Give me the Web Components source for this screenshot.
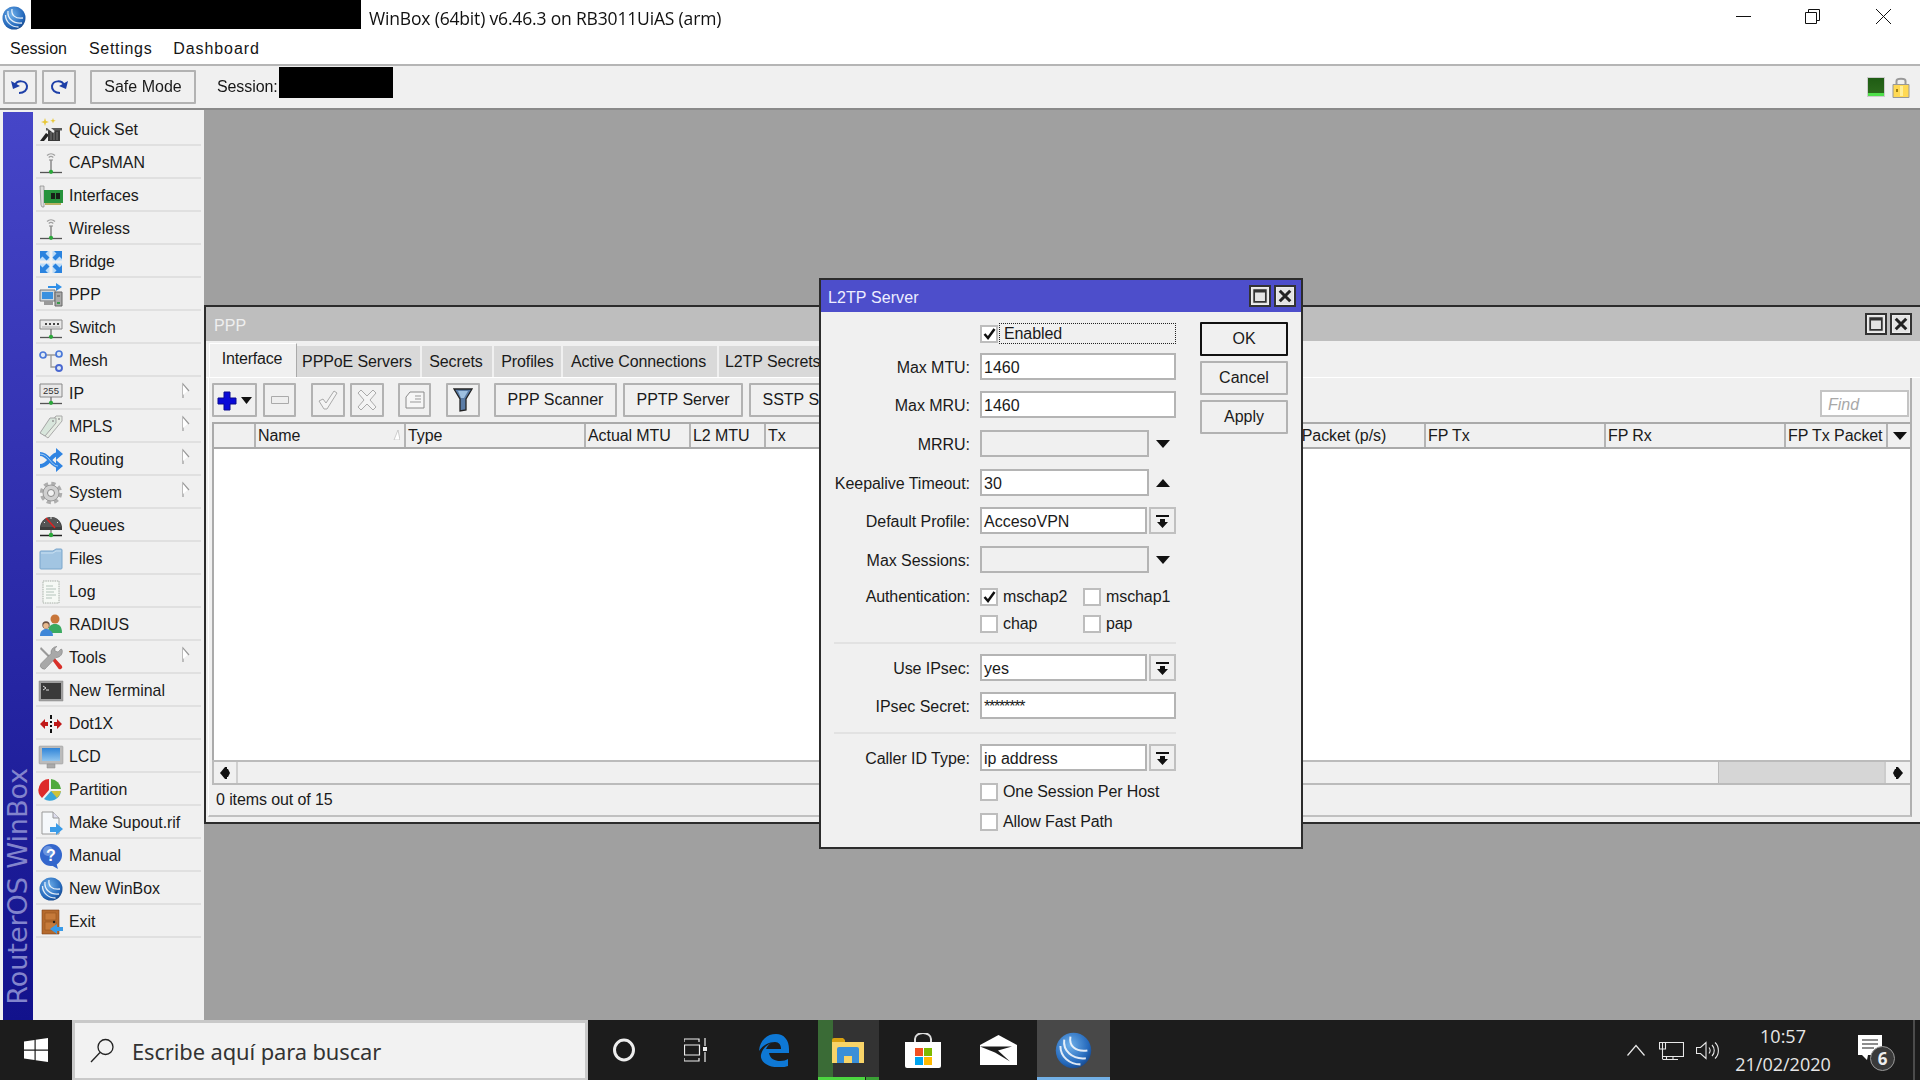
<!DOCTYPE html>
<html><head><meta charset="utf-8"><title>WinBox</title>
<style>
html,body{margin:0;padding:0;width:1920px;height:1080px;overflow:hidden;background:#a0a0a0;font:16px "Liberation Sans",Arial,sans-serif;color:#151515}
</style>
<script>
const def=(name,css,render)=>customElements.define(name,class extends HTMLElement{
  constructor(){super();this.attachShadow({mode:'open'})}
  connectedCallback(){this.shadowRoot.innerHTML=`<style>${css}</style>`+render(this)}
});
const a=(e,n,d='')=>e.hasAttribute(n)?e.getAttribute(n):d;
const S=(b,s)=>`<svg xmlns="http://www.w3.org/2000/svg" viewBox="${b}" style="display:block;width:100%;height:100%;overflow:visible">${s}</svg>`;
const wbLogo=`<defs><radialGradient id="wg" cx=".4" cy=".35" r=".75"><stop offset="0" stop-color="#6fb0ea"/><stop offset=".7" stop-color="#2468bb"/><stop offset="1" stop-color="#143c78"/></radialGradient></defs><ellipse cx="12" cy="12" rx="11.5" ry="11.5" fill="url(#wg)"/><path d="M6 5c-1 7 5 13 14 12M10 3c-1 6 3 10 11 9M3.5 9c0 7 6 12 13 12" fill="none" stroke="#fff" stroke-opacity=".85" stroke-width="1.3"/>`;
const ant=`<path d="M8 4.500a6 6 0 0 1 8 0M9.700 6.500a3.500 3.500 0 0 1 4.600 0" fill="none" stroke="#a0a0a0" stroke-width="1.200"/><path d="M10 9h4" stroke="#999" stroke-width="1.200"/><path d="M12 9v11" stroke="#8a8a8a" stroke-width="1.500"/><path d="M1 21.500h22" stroke="#555" stroke-width="1.300"/><circle cx="12" cy="20.800" r="2.100" fill="#2aa83a"/>`;
const ICONS={
quick:`<path d="M1 23l6-8 3 2-5 6z" fill="#222"/><path d="M9 11h12v12H9z" fill="#3a3a3a"/><path d="M7 10h16v2.500H7z" fill="#5a5a5a"/><path d="M12 14v8M15 14v8M18 14v8" stroke="#777"/><path d="M5 6l10 8" stroke="#eee" stroke-width="2.400"/><path d="M6 0l1 3 3 1-3 1-1 3-1-3-3-1 3-1zM14 0l.7 2 2 .7-2 .7-.7 2-.7-2-2-.7 2-.7z" fill="#e8c838"/>`,
ant,
ifaces:`<path d="M1 2h4v21H3l-1-2z" fill="#dcdcdc" stroke="#888" stroke-width=".7"/><path d="M5 6h19v13H5z" fill="#27933c"/><path d="M12 9h4v6h-4zM17 9h4v6h-4z" fill="#182018"/><path d="M6 19h16v2H6z" fill="#b8b060"/>`,
bridge:`<path d="M1 1h9.500v9.500H1z" fill="#bcdcf8"/><path d="M13.500 1H23v9.500h-9.500zM1 13.500h9.500V23H1zM13.500 13.500H23V23h-9.500z" fill="#bcdcf8"/><path d="M1 1h8l-2.500 2.500 4 4-3 3-4-4L1 9zM23 1h-8l2.500 2.500-4 4 3 3 4-4L23 9zM1 23h8l-2.500-2.500 4-4-3-3-4 4L1 15zM23 23h-8l2.500-2.500-4-4 3-3 4 4L23 15z" fill="#2a83df"/>`,
ppp:`<path d="M1 7h15v11H1z" fill="#cfd6dd" stroke="#777"/><path d="M3 9h11v7H3z" fill="#3a90df"/><path d="M5 18h9v4H5z" fill="#999"/><path d="M16 9h7v14h-7z" fill="#aaa" stroke="#666"/><path d="M18 13h3" stroke="#555"/><path d="M18 19h3v2h-3z" fill="#3a9a4a"/><path d="M9 3h8V0l6 4-6 4V5H9z" fill="#2f8fe8"/>`,
sw:`<path d="M1 4h22v9H1z" fill="#eaeaea" stroke="#888"/><path d="M6 7h2v2H6zM10 7h2v2h-2zM14 7h2v2h-2zM18 7h2v2h-2z" fill="#444"/><path d="M3 11h18" stroke="#aaa"/><path d="M12 13v7" stroke="#777" stroke-width="1.400"/><path d="M1 21.500h22" stroke="#555" stroke-width="1.300"/><circle cx="12" cy="20.800" r="2.100" fill="#2aa83a"/>`,
mesh:`<path d="M7 6h10M12 6v12h6" fill="none" stroke="#999" stroke-width="1.300"/><circle cx="4" cy="6" r="3" fill="#dfe9f5" stroke="#4a78d8" stroke-width="1.700"/><circle cx="20" cy="5" r="3" fill="#dfe9f5" stroke="#4a78d8" stroke-width="1.700"/><circle cx="20" cy="19" r="3" fill="#dfe9f5" stroke="#4a68d0" stroke-width="1.900"/>`,
ip:`<path d="M1 2h22v13H1z" fill="#e8e8e8" stroke="#888"/><text x="12" y="12" text-anchor="middle" font-family="Liberation Sans" font-size="9.500" fill="#333">255</text><path d="M12 15v5" stroke="#777" stroke-width="1.400"/><path d="M1 21.500h22" stroke="#555" stroke-width="1.300"/><circle cx="12" cy="20.800" r="2.100" fill="#2aa83a"/>`,
mpls:`<path d="M17 1h6v5L9 23l-7-5z" fill="#e6ece4" stroke="#aaa"/><path d="M11 3h6v5L6 21l-5-3z" fill="#d8e6dc" stroke="#a5a5a5"/><circle cx="20" cy="4" r="1" fill="#999"/><circle cx="14" cy="6" r="1" fill="#999"/>`,
routing:`<path d="M1 6c9 0 11 12 18 12M1 18c9 0 11-12 18-12" fill="none" stroke="#2f84e2" stroke-width="4"/><path d="M17 0l7 6-7 6zM17 12l7 6-7 6z" fill="#2f84e2"/><path d="M1 6c9 0 11 12 18 12" fill="none" stroke="#9cc8f4" stroke-width="1"/>`,
gear:`<circle cx="12" cy="12" r="9" fill="none" stroke="#aeaeae" stroke-width="4.500" stroke-dasharray="4 3.070"/><circle cx="12" cy="12" r="8" fill="#d0d0d0" stroke="#999"/><circle cx="12" cy="12" r="3.500" fill="#f2f2f2" stroke="#888"/>`,
queues:`<path d="M1 14a11 11 0 0 1 22 0v2H1z" fill="#3e3e3e"/><path d="M2 13a10 10 0 0 1 20 0z" fill="#555"/><path d="M7 4l9 10" stroke="#e02020" stroke-width="1.500"/><path d="M5 8l1 1M12 3v2M19 8l-1 1" stroke="#ddd"/><path d="M1 21.500h22" stroke="#222" stroke-width="1.500"/><path d="M12 16v4" stroke="#555"/><circle cx="12" cy="21" r="2.200" fill="#2aa83a"/>`,
folder:`<path d="M1 5q0-1 1-1h12l3-2h5q1 0 1 1v18q0 1-1 1H2q-1 0-1-1z" fill="#a2c5e2" stroke="#7aa6cc"/><path d="M2 6h12l3-2h5" fill="none" stroke="#c9e0f2"/>`,
log:`<path d="M4 1h16v22H4z" fill="#f6f9f5" stroke="#a8b0a8" stroke-dasharray="1.500 .8"/><path d="M7 6h7M7 9h10M7 12h8M7 15h10M7 18h6" stroke="#b4c4bb"/>`,
radius:`<circle cx="16" cy="6" r="4.500" fill="#c8763a"/><path d="M9 20c0-7 3-9 7-9s7 2 7 9z" fill="#3aaa60"/><circle cx="7" cy="12" r="3.700" fill="#6a5040"/><circle cx="7" cy="12.800" r="2.800" fill="#e7b98e"/><path d="M1 23c0-5 3-7 6-7s7 2 7 7z" fill="#3f87d8"/>`,
tools:`<path d="M2 1l10 10-1.500 1.500L1 3z" fill="#999"/><path d="M11 11l2-2 10 11q1 2-1 3t-3-1z" fill="#d8302a"/><path d="M22 3l-3 3-3-1 0-3 2-1.500a6 6 0 0 0-6 7L2 17.500q-2 3 1 5t4.500-1l9.500-10a6 6 0 0 0 6-8z" fill="#a8a8a8" stroke="#777" stroke-width=".5"/>`,
term:`<path d="M0 2h24v20H0z" fill="#a0a0a0" stroke="#888" stroke-width=".5"/><path d="M2 4h20v16H2z" fill="#3a3a3a"/><path d="M4 7l3 2-3 2M7 11h3" stroke="#ddd" fill="none"/>`,
dot:`<path d="M1 12l5-5v3h3v4H6v3zM23 12l-5-5v3h-3v4h3v3z" fill="#c01818"/><path d="M11 3h2v4h-2zM11 9h2v2h-2zM11 13h2v2h-2zM11 17h2v4h-2z" fill="#111"/>`,
lcd:`<defs><linearGradient id="lg" x2="0" y2="1"><stop offset="0" stop-color="#2f84d8"/><stop offset="1" stop-color="#8fc4ee"/></linearGradient></defs><path d="M1 1h22q1 0 1 1v16q0 1-1 1H1q-1 0-1-1V2q0-1 1-1z" fill="#bbb" stroke="#999" stroke-width=".5"/><path d="M3 3h18v13H3z" fill="url(#lg)"/><path d="M8 19h8v4H8z" fill="#aaa" stroke="#888" stroke-width=".5"/>`,
part:`<path d="M10 1A11 11 0 0 0 3 20l7-8z" fill="#dd2b2b"/><path d="M12 1a11 11 0 0 1 10 10H12z" fill="#4eaa3c"/><path d="M22 13a11 11 0 0 1-17 8l7-8z" fill="#39a5d8"/><path d="M22 13a11 11 0 0 1-4 7l-6-7z" fill="#cfc23a"/>`,
sup:`<path d="M3 1h11l6 6v16H3z" fill="#f5f8fb" stroke="#999"/><path d="M14 1v6h6" fill="#dde" stroke="#999"/><path d="M11 16h6v-4l7 6-7 6v-3h-6z" fill="#3a9be8"/>`,
man:`<circle cx="12" cy="11" r="11" fill="#3366cc"/><path d="M12 21l7 4-2-7z" fill="#3366cc"/><circle cx="9" cy="7" r="5" fill="#8fb0ea" opacity=".6"/><text x="12" y="17" text-anchor="middle" font-family="Liberation Sans" font-weight="700" font-size="16" fill="#fff">?</text>`,
wb:wbLogo,
exit:`<path d="M3 0h17v24H3z" fill="#b56a2d" stroke="#7c421a" stroke-width=".6"/><path d="M6 3h11v7H6zM6 12h11v8H6z" fill="#c67a3a" stroke="#94551f" stroke-width=".6"/><circle cx="15" cy="12" r="1.200" fill="#222"/><path d="M24 17h-6v-3l-7 5 7 5v-3h6z" fill="#3a9be8"/>`,
};
def('wb-icon',':host{display:block;width:var(--s,24px);height:var(--s,24px);flex:none}',e=>S('0 0 24 24',ICONS[a(e,'name')]||''));

def('wb-titlebar',`:host{display:flex;align-items:center;height:35px;background:#fff;position:relative;font:17.500px "Open Sans",sans-serif;color:#111}
.logo{width:24px;height:24px;margin:0 0 0 2px}.red{width:330px;height:29px;background:#000;margin:-6px 8px 0 5px;flex:none}
.t{flex:1;letter-spacing:-.17px;margin-top:0}.b{width:15px;height:15px;margin-top:-3px}
.b svg{display:block}`,e=>`<div class="logo">${S('0 0 24 24',wbLogo)}</div><div class="red"></div><div class="t"><slot></slot></div>
<div class="b" style="margin-right:54px"><svg width="15" height="15" fill="none" stroke="#111"><path d="M0 7.500h15"/></svg></div>
<div class="b" style="margin-right:56px"><svg width="15" height="15" fill="none" stroke="#111"><path d="M.5 3.500h11v11H.5zM3.500 3.500V.5h11v11h-3"/></svg></div>
<div class="b" style="margin-right:29px"><svg width="15" height="15" fill="none" stroke="#111"><path d="M0 0l15 15M15 0L0 15"/></svg></div>`);

def('wb-menubar',`:host{display:flex;align-items:center;background:#fff;padding:0 0 2px 10px;border-bottom:2px solid #b5b5b5;box-sizing:content-box;height:27px;font:16px "Liberation Sans",sans-serif}
::slotted(span){margin-right:21px}`,()=>`<slot></slot>`);

def('wb-toolbutton',`:host{display:flex;align-items:center;justify-content:center;box-sizing:border-box;height:var(--h,34px);background:#f0f0f0;border:2px solid #b2b2b2;border-radius:1px;flex:none;font:16px "Liberation Sans",sans-serif;color:#1a1a1a;white-space:nowrap}
:host([dark]){border-color:#111}svg{display:block}`,e=>`<slot></slot>`);

def('wb-mainbar',`:host{display:flex;align-items:center;height:42px;background:#f0f0f0;border-bottom:2px solid #8a8a8a;padding-left:3px;--h:34px;position:relative}
.sp{flex:1}.st{width:16px;height:18px;background:linear-gradient(#1f5c14,#2c6a1c 85%,#4fe04a 85%);margin-right:7px;border:1px solid #ccc}
.lock{width:18px;height:22px;margin-right:10px}`,()=>`<slot></slot><div class="sp"></div><div class="st"></div>
<div class="lock">${S('0 0 18 22',`<path d="M4.500 9V5c0-3 9-3 9 0v4" fill="none" stroke="#999" stroke-width="2"/><path d="M1 8.500h16v13H1z" fill="#ffd954" stroke="#999"/><path d="M8 10v10h3V10z" fill="#ffef9a"/><path d="M4 13h2v3H4z" fill="#a08010"/>`)}</div>`);

def('wb-sideitem',`:host{display:flex;align-items:center;height:33px;box-sizing:border-box;border-bottom:2px solid #e0e0e0;padding:2px 0 0 3px;position:relative;font:15.900px "Liberation Sans",sans-serif;color:#1a1a1a}
span{margin-left:6px;white-space:nowrap}
.arr{position:absolute;right:11px;top:6px;width:8px;height:16px}`,e=>`<wb-icon name="${a(e,'icon')}"></wb-icon><span><slot></slot></span>${e.hasAttribute('sub')?`<div class="arr">${S('0 0 8 16','<path d="M1 15V1l6 7" fill="none" stroke="#999" stroke-width="1.200"/><path d="M1 2l4.500 6L1 12z" fill="#fff"/>')}</div>`:''}`);

def('wb-sidebar',`:host{display:flex;width:204px;height:100%;flex:none;background:#f0f0f0;padding:2px 0 0 3px;box-sizing:border-box}
.brand{width:30px;background:linear-gradient(#4646c8,#12128c);display:flex;flex-direction:column;justify-content:flex-end;align-items:center}
.brand span{writing-mode:vertical-rl;transform:rotate(180deg);font:27.100px "DejaVu Sans",sans-serif;color:#8284cc;padding-top:15px;line-height:28px;white-space:nowrap;letter-spacing:-.1px}
.list{flex:1;padding:1px 3px 0 3px}`,()=>`<div class="brand"><span>RouterOS WinBox</span></div><div class="list"><slot></slot></div>`);

def('wb-window',`:host{position:absolute;display:flex;flex-direction:column;box-sizing:border-box;background:#f0f0f0;border:2px solid #2c2c2c}
.tb{display:flex;align-items:center;height:var(--th);flex:none;background:var(--tc);color:var(--tt);font:16px "Liberation Sans",sans-serif;padding-left:var(--tp,8px);letter-spacing:.1px}
.tb span{flex:1;padding-top:3px}.w{width:var(--bw,22px);height:22px;box-sizing:border-box;border:2px solid #333;background:#e4e4e4;margin-right:3px;padding:2px;outline:1px solid #eee;outline-offset:-3px}
.body{flex:1;display:flex;flex-direction:column;min-height:0}`,e=>`<div class="tb"><span>${a(e,'heading')}</span>
<div class="w">${S('0 0 12 12','<path d="M1 1h10v10H1z" fill="none" stroke="#333" stroke-width="1.500"/><path d="M1 2h10" stroke="#333" stroke-width="2"/>')}</div>
<div class="w" style="margin-right:var(--wm,3px)">${S('0 0 12 12','<path d="M1.500 1.500l9 9M10.500 1.500l-9 9" stroke="#222" stroke-width="2.600"/>')}</div></div><div class="body"><slot></slot></div>`);

def('wb-tabs',`:host{display:flex;align-items:flex-end;height:37px;flex:none;padding-left:3px;overflow:hidden;border-bottom:1px solid #fff;box-sizing:border-box}`,()=>`<slot></slot>`);
def('wb-tab',`:host{display:flex;align-items:center;justify-content:center;flex:none;height:31px;box-sizing:border-box;background:#d9d9d9;margin-left:2px;font:16px "Liberation Sans",sans-serif;color:#1a1a1a;white-space:nowrap;letter-spacing:-.1px;padding-top:1px;overflow:hidden}
:host([active]){height:34px;background:#f0f0f0;border:1px solid #fff;border-bottom:0;border-right:1px solid #aaa;margin-left:0;padding-bottom:5px;letter-spacing:-.2px;padding-right:2px}`,()=>`<slot></slot>`);

def('wb-panel',`:host{display:flex;flex-direction:column;flex:1;min-height:0;margin:0 8px 5px 2px;border-left:1px solid #fff;border-right:2px solid #b0b0b0;border-bottom:2px solid #c0c0c0;padding:5px 0 0 3px}`,()=>`<slot></slot>`);
def('wb-ptoolbar',`:host{display:flex;align-items:center;height:34px;flex:none;gap:6px;overflow:hidden;position:relative;padding-right:2px}
.find{position:absolute;right:1px;top:7px;width:89px;height:27px;box-sizing:border-box;background:#fff;border:2px solid #c4c4c4;font:italic 16px "Liberation Sans",sans-serif;color:#a8a8a8;padding:4px 0 0 6px}`,()=>`<slot></slot><div class="find">Find</div>`);

def('wb-thead',`:host{display:flex;height:27px;flex:none;margin-top:5px;border:2px solid #aaa;border-width:2px 0 2px 2px;box-sizing:border-box;background:#f0f0f0}`,()=>`<slot></slot>`);
def('wb-th',`:host{display:flex;align-items:center;box-sizing:border-box;flex:none;border-right:2px solid #b4b4b4;padding:0 0 0 2px;font:16px "Liberation Sans",sans-serif;color:#1a1a1a;white-space:nowrap;overflow:hidden;position:relative;letter-spacing:-.08px}`,()=>`<slot></slot>`);
def('wb-tbody',`:host{display:block;flex:1;background:#fff;border-left:2px solid #aaa}`,()=>``);
def('wb-hscroll',`:host{display:flex;height:25px;flex:none;border:2px solid #bbb;border-width:2px 0 2px 2px;box-sizing:border-box;background:#f0f0f0}
.b{width:22px;display:flex;align-items:center;justify-content:center;flex:none;border-right:2px solid #d0d0d0}.b.r{border:0;border-left:2px solid #ccc;width:24px}
.th{flex:1;border-right:1px solid #bbb}.tr{width:165px;background:#d6d6d6}`,()=>`<div class="b"><svg width="10" height="12"><path d="M0 6l5-6h2v12H5z" fill="#111"/><path d="M5 2h3l2 4-2 4H5z" fill="#111"/></svg></div><div class="th"></div><div class="tr"></div><div class="b r"><svg width="10" height="12"><path d="M10 6L5 0H3v12h2z" fill="#111"/><path d="M5 2H2L0 6l2 4h3z" fill="#111"/></svg></div>`);
def('wb-status',`:host{display:flex;align-items:center;height:30px;flex:none;padding-left:4px;font:16px "Liberation Sans",sans-serif;color:#1a1a1a;letter-spacing:-.1px}`,()=>`<slot></slot>`);

def('wb-field',`:host{display:grid;grid-template-columns:136px 1fr;column-gap:10px;align-items:center;height:27px;font:16px "Liberation Sans",sans-serif;color:#1a1a1a;margin-top:var(--mt,11px)}
.l{text-align:right;white-space:nowrap;letter-spacing:-.05px;padding-top:2px}.r{display:flex;align-items:center}
.v{box-sizing:border-box;height:27px;background:#fff;border:2px solid #b4b4b4;padding:0 0 0 2px;line-height:25px;font-size:16px;white-space:nowrap;overflow:hidden}
.v.pw{letter-spacing:-1.200px}
:host([off]) .v{background:#f0f0f0}
.tri{width:27px;display:flex;justify-content:center;box-sizing:border-box;padding-left:1px}
.dd{box-sizing:border-box;width:27px;height:27px;background:#f0f0f0;border:2px solid #c0c0c0;margin-left:2px;display:flex;align-items:center;justify-content:center}`,e=>{
  const k=a(e,'kind','full');const w={full:196,short:169,drop:167}[k];
  const t=a(e,'tri');
  return `<div class="l">${a(e,'label')}</div><div class="r"><div class="v${e.hasAttribute('pw')?' pw':''}" style="width:${w}px">${a(e,'value')}</div>${
    k==='drop'?`<div class="dd"><svg width="13" height="14"><path d="M0 1h13v2H0z" fill="#111"/><path d="M4 5h5v3h3l-5.500 6L1 8h3z" fill="#111"/></svg></div>`:''}${
    t==='down'?`<div class="tri"><svg width="14" height="8"><path d="M0 0h14L7 8z" fill="#111"/></svg></div>`:''}${
    t==='up'?`<div class="tri"><svg width="14" height="8"><path d="M0 8h14L7 0z" fill="#111"/></svg></div>`:''}</div>`});

def('wb-check',`:host{display:flex;align-items:center;font:16px "Liberation Sans",sans-serif;color:#1a1a1a;white-space:nowrap;letter-spacing:-.1px}
.b{box-sizing:border-box;width:18px;height:18px;background:#fff;border:2px solid #bdbdbd;flex:none;margin-right:5px;display:flex;align-items:center;justify-content:center}
span{padding-top:1px}`,e=>`<div class="b">${e.hasAttribute('on')?`<svg width="13" height="12"><path d="M1.500 6l3.500 4 6.500-9" fill="none" stroke="#111" stroke-width="2.500"/></svg>`:''}</div><span><slot></slot></span>`);

def('wb-checkrow',`:host{display:grid;grid-template-columns:136px auto;column-gap:10px;align-items:start;font:16px "Liberation Sans",sans-serif;color:#1a1a1a;margin-top:var(--mt,8px)}
.l{text-align:right;letter-spacing:-.1px;line-height:20px}.g{display:grid;grid-template-columns:103px auto;row-gap:8px}`,e=>`<div class="l">${a(e,'label')}</div><div class="g"><slot></slot></div>`);
def('wb-rule',`:host{display:block;height:2px;background:#e2e2e2;margin-top:var(--mt,9px);width:342px}`,()=>``);
def('wb-form',`:host{display:block;width:342px;flex:none}`,()=>`<slot></slot>`);
def('wb-dlgbtns',`:host{display:flex;flex-direction:column;gap:5px;width:88px;margin:-1px 0 0 24px;--h:34px}`,()=>`<slot></slot>`);
def('wb-dlgbody',`:host{display:flex;padding:11px 0 0 13px;flex:1}`,()=>`<slot></slot>`);
def('wb-enabled',`:host{display:flex;align-items:center;height:21px;padding-left:146px;font:16px "Liberation Sans",sans-serif;color:#1a1a1a}
.b{box-sizing:border-box;width:18px;height:18px;background:#fff;border:2px solid #bdbdbd;display:flex;align-items:center;justify-content:center;flex:none;margin-right:1px}
.f{box-sizing:border-box;width:178px;height:21px;border:1px dotted #222;padding-left:4px;line-height:20px;letter-spacing:-.1px}`,e=>`<div class="b"><svg width="13" height="12"><path d="M1.500 6l3.500 4 6.500-9" fill="none" stroke="#111" stroke-width="2.500"/></svg></div><div class="f"><slot></slot></div>`);

def('wb-desktop',`:host{display:block;flex:1;position:relative;background:#a0a0a0;overflow:hidden}`,()=>`<slot></slot>`);
def('wb-workspace',`:host{display:flex;height:910px}`,()=>`<slot></slot>`);
def('wb-winbox',`:host{display:block;height:1020px;filter:blur(.55px)}`,()=>`<slot></slot>`);

def('wb-taskbar',`:host{display:flex;height:60px;background:#1c1c1c;align-items:stretch;position:relative}
.start{width:72px;display:flex;align-items:center;justify-content:center;flex:none}
.search{box-sizing:border-box;width:516px;flex:none;background:#f2f2f2;border:3px solid #c9c9c9;border-bottom-width:2px;display:flex;align-items:center;padding-left:15px;font:21.900px "Noto Sans",sans-serif;color:#333;letter-spacing:-.1px}
.search svg{margin-right:17px;flex:none}.search span{margin-top:1px}
.i{display:flex;align-items:center;justify-content:center;flex:none;position:relative;box-sizing:border-box}
.ex{background:linear-gradient(90deg,#3a6b36 15px,#333 15px)}
.ex::after{content:"";position:absolute;left:0;right:0;bottom:0;height:3px;background:linear-gradient(90deg,#4cd640 47px,#1c1c1c 47px,#1c1c1c 48px,#3aa035 48px)}
.act{background:#484848}.act::after{content:"";position:absolute;left:0;right:0;bottom:0;height:3px;background:#72b0e6}
.tray{margin-left:auto;display:flex;align-items:center;color:#e8e8e8}
.clock{width:108px;text-align:center;font:18px/28px "Open Sans",sans-serif;color:#e6e6e6;flex:none}
.ed{width:2px;height:60px;background:#4c4c4c;margin:0 5px 0 31px}.n{position:relative}
.badge{position:absolute;left:12px;top:11px;width:23px;height:23px;border-radius:50%;background:#3a3a3a;border:1px solid #999;color:#eee;font:bold 17px/23px "Open Sans",sans-serif;text-align:center}`,()=>`
<div class="start"><svg width="24" height="24"><path d="M0 3.500L10.500 2v9.500H0zM11.700 1.800L24 0v11.500H11.700zM0 12.700h10.500V22L0 20.500zM11.700 12.700H24V24l-12.300-1.800z" fill="#fff"/></svg></div>
<div class="search"><svg width="25" height="25" fill="none" stroke="#222" stroke-width="1.300"><circle cx="15.500" cy="9" r="7.500"/><path d="M10 14.500L1 24"/></svg><span>Escribe aquí para buscar</span></div>
<div class="i" style="width:72px"><svg width="24" height="24" fill="none"><ellipse cx="12" cy="12" rx="9.500" ry="10" stroke="#eee" stroke-width="3"/></svg></div>
<div class="i" style="width:72px"><svg width="24" height="24" fill="none" stroke="#eee" stroke-width="1.200"><path d="M0 4V1h15v3M0 20v3h15v-3M.5 7h15v10H.5zM21 0v8M21 14v10"/><path d="M19 9h4v4h-4z" fill="#eee" stroke="none"/></svg></div>
<div class="i" style="width:86px;padding-right:3px"><svg width="32" height="34"><path d="M1 18C2 7 9 1 18 1c8 0 13 6 13 15v4H11c1 6 6 8 11 8 4 0 6-1 8-2v7c-3 1-5 1.500-9 1.500C9 34 2 28 3 22c1-5 4-9 10-12-3 2-4 4-5 6h15c0-4-2-7-6-7C11 9 5 12 1 18z" fill="#0e78d5"/></svg></div>
<div class="i ex" style="width:61px;padding-right:1px"><svg width="32" height="26"><path d="M0 3a2 2 0 0 1 2-2h9l2 2v3H0z" fill="#d8a010"/><path d="M0 5h32v21H0z" fill="#f8d468"/><path d="M5 12q0-2 2-2h18q2 0 2 2v14h-7v-7h-8v7H5z" fill="#3a8fd8"/></svg></div>
<div class="i" style="width:89px;padding-right:2px"><svg width="36" height="35"><path d="M10 10V6a8 6 0 0 1 16 0v4" fill="none" stroke="#ddd" stroke-width="2"/><path d="M0 9h36v24a2 2 0 0 1-2 2H2a2 2 0 0 1-2-2z" fill="#fff"/><path d="M10 15h8v8h-8z" fill="#f25022"/><path d="M19 15h8v8h-8z" fill="#7fba00"/><path d="M10 24h8v8h-8z" fill="#00a4ef"/><path d="M19 24h8v8h-8z" fill="#ffb900"/></svg></div>
<div class="i" style="width:62px;padding-right:2px"><svg width="37" height="30"><path d="M0 10L18.500 0 37 10v20H0z" fill="#fff"/><path d="M0 11.500l32 0-14 4 12 11-15-9z" fill="#1c1c1c"/></svg></div>
<div style="width:7px"></div>
<div class="i act" style="width:73px"><div style="width:37px;height:37px">${S('0 0 24 24',wbLogo)}</div></div>
<div class="tray">
<svg width="18" height="12" fill="none" stroke="#e8e8e8" stroke-width="1.200" style="margin-right:14px"><path d="M.5 11.500l8.500-10 8.500 10"/></svg>
<svg width="25" height="19" fill="none" stroke="#e8e8e8" stroke-width="1.100" style="margin-right:12px"><path d="M6 1.500h18.500v14H4M.5 1.500H6.500V8H.5zM3.500 1v17M3.500 18.500h7M7.500 15.500v3M14 15.500v3M9 18.500h10"/></svg>
<svg width="23" height="19" fill="none" stroke="#e8e8e8" stroke-width="1.100" style="margin-right:10px"><path d="M.5 6.500h4l5.500-5v16l-5.500-5h-4zM13 6.500c1.500 2 1.500 4 0 6M16 4c3 3 3 8 0 11M19 1.500c4.500 4 4.500 12 0 16"/></svg>
<div class="clock">10:57<br>21/02/2020</div>
<div style="width:21px"></div>
<div class="n"><svg width="24" height="26"><path d="M0 0h24v20H10l-1 5-5-5H0z" fill="#fff"/><path d="M4 5h16M4 9h16M4 13h12" stroke="#1c1c1c" stroke-width="1.200"/></svg><div class="badge">6</div></div>
<div class="ed"></div>
</div>`);
</script>
</head><body>
<wb-winbox>
<wb-titlebar>WinBox (64bit) v6.46.3 on RB3011UiAS (arm)</wb-titlebar>
<wb-menubar><span>Session</span><span style="letter-spacing:.7px;margin-left:1px">Settings</span><span style="letter-spacing:.9px">Dashboard</span></wb-menubar>
<wb-mainbar>
 <wb-toolbutton style="width:34px"><svg width="20" height="18" viewBox="0 0 20 18"><path d="M5 7c2-5 11-5 12 1 .5 4-3 7-8 7" fill="none" stroke="#1d3fa8" stroke-width="2"/><path d="M1 3l2 8 7-3z" fill="#1d3fa8"/></svg></wb-toolbutton>
 <wb-toolbutton style="width:34px;margin-left:5px"><svg width="20" height="18" viewBox="0 0 20 18"><path d="M15 7C13 2 4 2 3 8c-.5 4 3 7 8 7" fill="none" stroke="#1d3fa8" stroke-width="2"/><path d="M19 3l-2 8-7-3z" fill="#1d3fa8"/></svg></wb-toolbutton>
 <wb-toolbutton style="width:106px;margin-left:14px">Safe Mode</wb-toolbutton>
 <span style="margin-left:21px;letter-spacing:-.1px">Session:</span>
 <span style="display:block;width:114px;height:31px;background:#000;margin:-9px 0 0 1px"></span>
</wb-mainbar>
<wb-workspace>
 <wb-sidebar>
  <wb-sideitem icon="quick">Quick Set</wb-sideitem>
  <wb-sideitem icon="ant">CAPsMAN</wb-sideitem>
  <wb-sideitem icon="ifaces">Interfaces</wb-sideitem>
  <wb-sideitem icon="ant">Wireless</wb-sideitem>
  <wb-sideitem icon="bridge">Bridge</wb-sideitem>
  <wb-sideitem icon="ppp">PPP</wb-sideitem>
  <wb-sideitem icon="sw">Switch</wb-sideitem>
  <wb-sideitem icon="mesh">Mesh</wb-sideitem>
  <wb-sideitem icon="ip" sub>IP</wb-sideitem>
  <wb-sideitem icon="mpls" sub>MPLS</wb-sideitem>
  <wb-sideitem icon="routing" sub>Routing</wb-sideitem>
  <wb-sideitem icon="gear" sub>System</wb-sideitem>
  <wb-sideitem icon="queues">Queues</wb-sideitem>
  <wb-sideitem icon="folder">Files</wb-sideitem>
  <wb-sideitem icon="log">Log</wb-sideitem>
  <wb-sideitem icon="radius">RADIUS</wb-sideitem>
  <wb-sideitem icon="tools" sub>Tools</wb-sideitem>
  <wb-sideitem icon="term">New Terminal</wb-sideitem>
  <wb-sideitem icon="dot">Dot1X</wb-sideitem>
  <wb-sideitem icon="lcd">LCD</wb-sideitem>
  <wb-sideitem icon="part">Partition</wb-sideitem>
  <wb-sideitem icon="sup">Make Supout.rif</wb-sideitem>
  <wb-sideitem icon="man">Manual</wb-sideitem>
  <wb-sideitem icon="wb">New WinBox</wb-sideitem>
  <wb-sideitem icon="exit">Exit</wb-sideitem>
 </wb-sidebar>
 <wb-desktop>
  <wb-window heading="PPP" style="left:0;top:195px;width:1718px;height:519px;--th:34px;--tc:#bebebe;--tt:#efefef;--wm:8px">
   <wb-tabs>
    <wb-tab active style="width:88px">Interface</wb-tab>
    <wb-tab style="width:123px;margin-left:0;padding-right:3px">PPPoE Servers</wb-tab>
    <wb-tab style="width:70px;padding-right:2px">Secrets</wb-tab>
    <wb-tab style="width:67px">Profiles</wb-tab>
    <wb-tab style="width:154px;padding-right:3px">Active Connections</wb-tab>
    <wb-tab style="width:104px;padding-left:6px;justify-content:flex-start">L2TP Secrets</wb-tab>
   </wb-tabs>
   <wb-panel>
    <wb-ptoolbar>
     <wb-toolbutton style="width:45px"><svg width="36" height="22"><path d="M7 3h6v6h6v6h-6v6H7v-6H1V9h6z" fill="#0a0ad8" stroke="#0a0a90"/><path d="M24 8h11l-5.500 7z" fill="#111"/></svg></wb-toolbutton>
     <wb-toolbutton style="width:33px"><svg width="18" height="8"><path d="M.5.5h17v7H.5z" fill="#eee" stroke="#aaa"/></svg></wb-toolbutton>
     <wb-toolbutton style="width:34px;margin-left:9px"><svg width="20" height="20"><path d="M1 11l4-2 3 4 8-12 3 2-10 16h-3z" fill="#f4f4f4" stroke="#aaa"/></svg></wb-toolbutton>
     <wb-toolbutton style="width:34px;margin-left:-1px"><svg width="20" height="22"><path d="M1 4l3-3 6 6 6-6 3 3-6 7 6 7-3 3-6-6-6 6-3-3 6-7z" fill="#f4f4f4" stroke="#aaa"/></svg></wb-toolbutton>
     <wb-toolbutton style="width:33px;margin-left:8px"><svg width="20" height="18"><path d="M5 1h14v16H1V6z" fill="#f6f6f6" stroke="#8a8a8a"/><path d="M10 5h6M10 8h6M5 11h11" stroke="#999"/></svg></wb-toolbutton>
     <wb-toolbutton style="width:34px;margin-left:9px"><svg width="20" height="24"><path d="M1 1h18l-6 10v11l-6 1V11z" fill="#5a7ca6" stroke="#222" stroke-width="1.300"/><path d="M5 3h10l-4 7H8z" fill="#9ec0e0"/></svg></wb-toolbutton>
     <wb-toolbutton style="width:123px;margin-left:8px">PPP Scanner</wb-toolbutton>
     <wb-toolbutton style="width:120px">PPTP Server</wb-toolbutton>
     <wb-toolbutton style="width:120px">SSTP Server</wb-toolbutton>
    </wb-ptoolbar>
    <wb-thead>
     <wb-th style="width:42px"></wb-th>
     <wb-th style="width:150px">Name<svg width="8" height="10" style="position:absolute;right:4px;top:6px"><path d="M6 0l2 10H2z" fill="#fff" stroke="#bbb" stroke-width=".7"/></svg></wb-th>
     <wb-th style="width:180px">Type</wb-th>
     <wb-th style="width:105px">Actual MTU</wb-th>
     <wb-th style="width:75px">L2 MTU</wb-th>
     <wb-th style="width:180px">Tx</wb-th>
     <wb-th style="width:180px">Rx</wb-th>
     <wb-th style="width:150px">Tx Packet (p/s)</wb-th>
     <wb-th style="width:150px">Rx Packet (p/s)</wb-th>
     <wb-th style="width:180px">FP Tx</wb-th>
     <wb-th style="width:180px">FP Rx</wb-th>
     <wb-th style="width:102px">FP Tx Packet</wb-th>
     <wb-th style="width:22px;border:0;padding-left:5px"><svg width="14" height="8"><path d="M0 0h14L7 8z" fill="#111"/></svg></wb-th>
    </wb-thead>
    <wb-tbody></wb-tbody>
    <wb-hscroll></wb-hscroll>
    <wb-status>0 items out of 15</wb-status>
   </wb-panel>
  </wb-window>
  <wb-window heading="L2TP Server" style="left:615px;top:168px;width:484px;height:571px;--th:32px;--tc:#4d4ecb;--tt:#eef;--tp:7px;--wm:5px">
   <wb-dlgbody>
    <wb-form>
     <wb-enabled>Enabled</wb-enabled>
     <wb-field style="--mt:9px" label="Max MTU:" value="1460"></wb-field>
     <wb-field label="Max MRU:" value="1460"></wb-field>
     <wb-field style="--mt:12px" label="MRRU:" kind="short" tri="down" off></wb-field>
     <wb-field style="--mt:12px" label="Keepalive Timeout:" value="30" kind="short" tri="up"></wb-field>
     <wb-field label="Default Profile:" value="AccesoVPN" kind="drop"></wb-field>
     <wb-field style="--mt:12px" label="Max Sessions:" kind="short" tri="down" off></wb-field>
     <wb-checkrow style="--mt:14px" label="Authentication:">
       <wb-check on>mschap2</wb-check><wb-check>mschap1</wb-check><wb-check>chap</wb-check><wb-check>pap</wb-check>
     </wb-checkrow>
     <wb-rule></wb-rule>
     <wb-field style="--mt:10px" label="Use IPsec:" value="yes" kind="drop"></wb-field>
     <wb-field pw label="IPsec Secret:" value="********"></wb-field>
     <wb-rule style="--mt:13px"></wb-rule>
     <wb-field style="--mt:10px" label="Caller ID Type:" value="ip address" kind="drop"></wb-field>
     <wb-checkrow style="--mt:11px"><wb-check>One Session Per Host</wb-check></wb-checkrow>
     <wb-checkrow style="--mt:11px"><wb-check>Allow Fast Path</wb-check></wb-checkrow>
    </wb-form>
    <wb-dlgbtns>
     <wb-toolbutton dark>OK</wb-toolbutton>
     <wb-toolbutton>Cancel</wb-toolbutton>
     <wb-toolbutton>Apply</wb-toolbutton>
    </wb-dlgbtns>
   </wb-dlgbody>
  </wb-window>
 </wb-desktop>
</wb-workspace>
</wb-winbox>
<wb-taskbar></wb-taskbar>
</body></html>
